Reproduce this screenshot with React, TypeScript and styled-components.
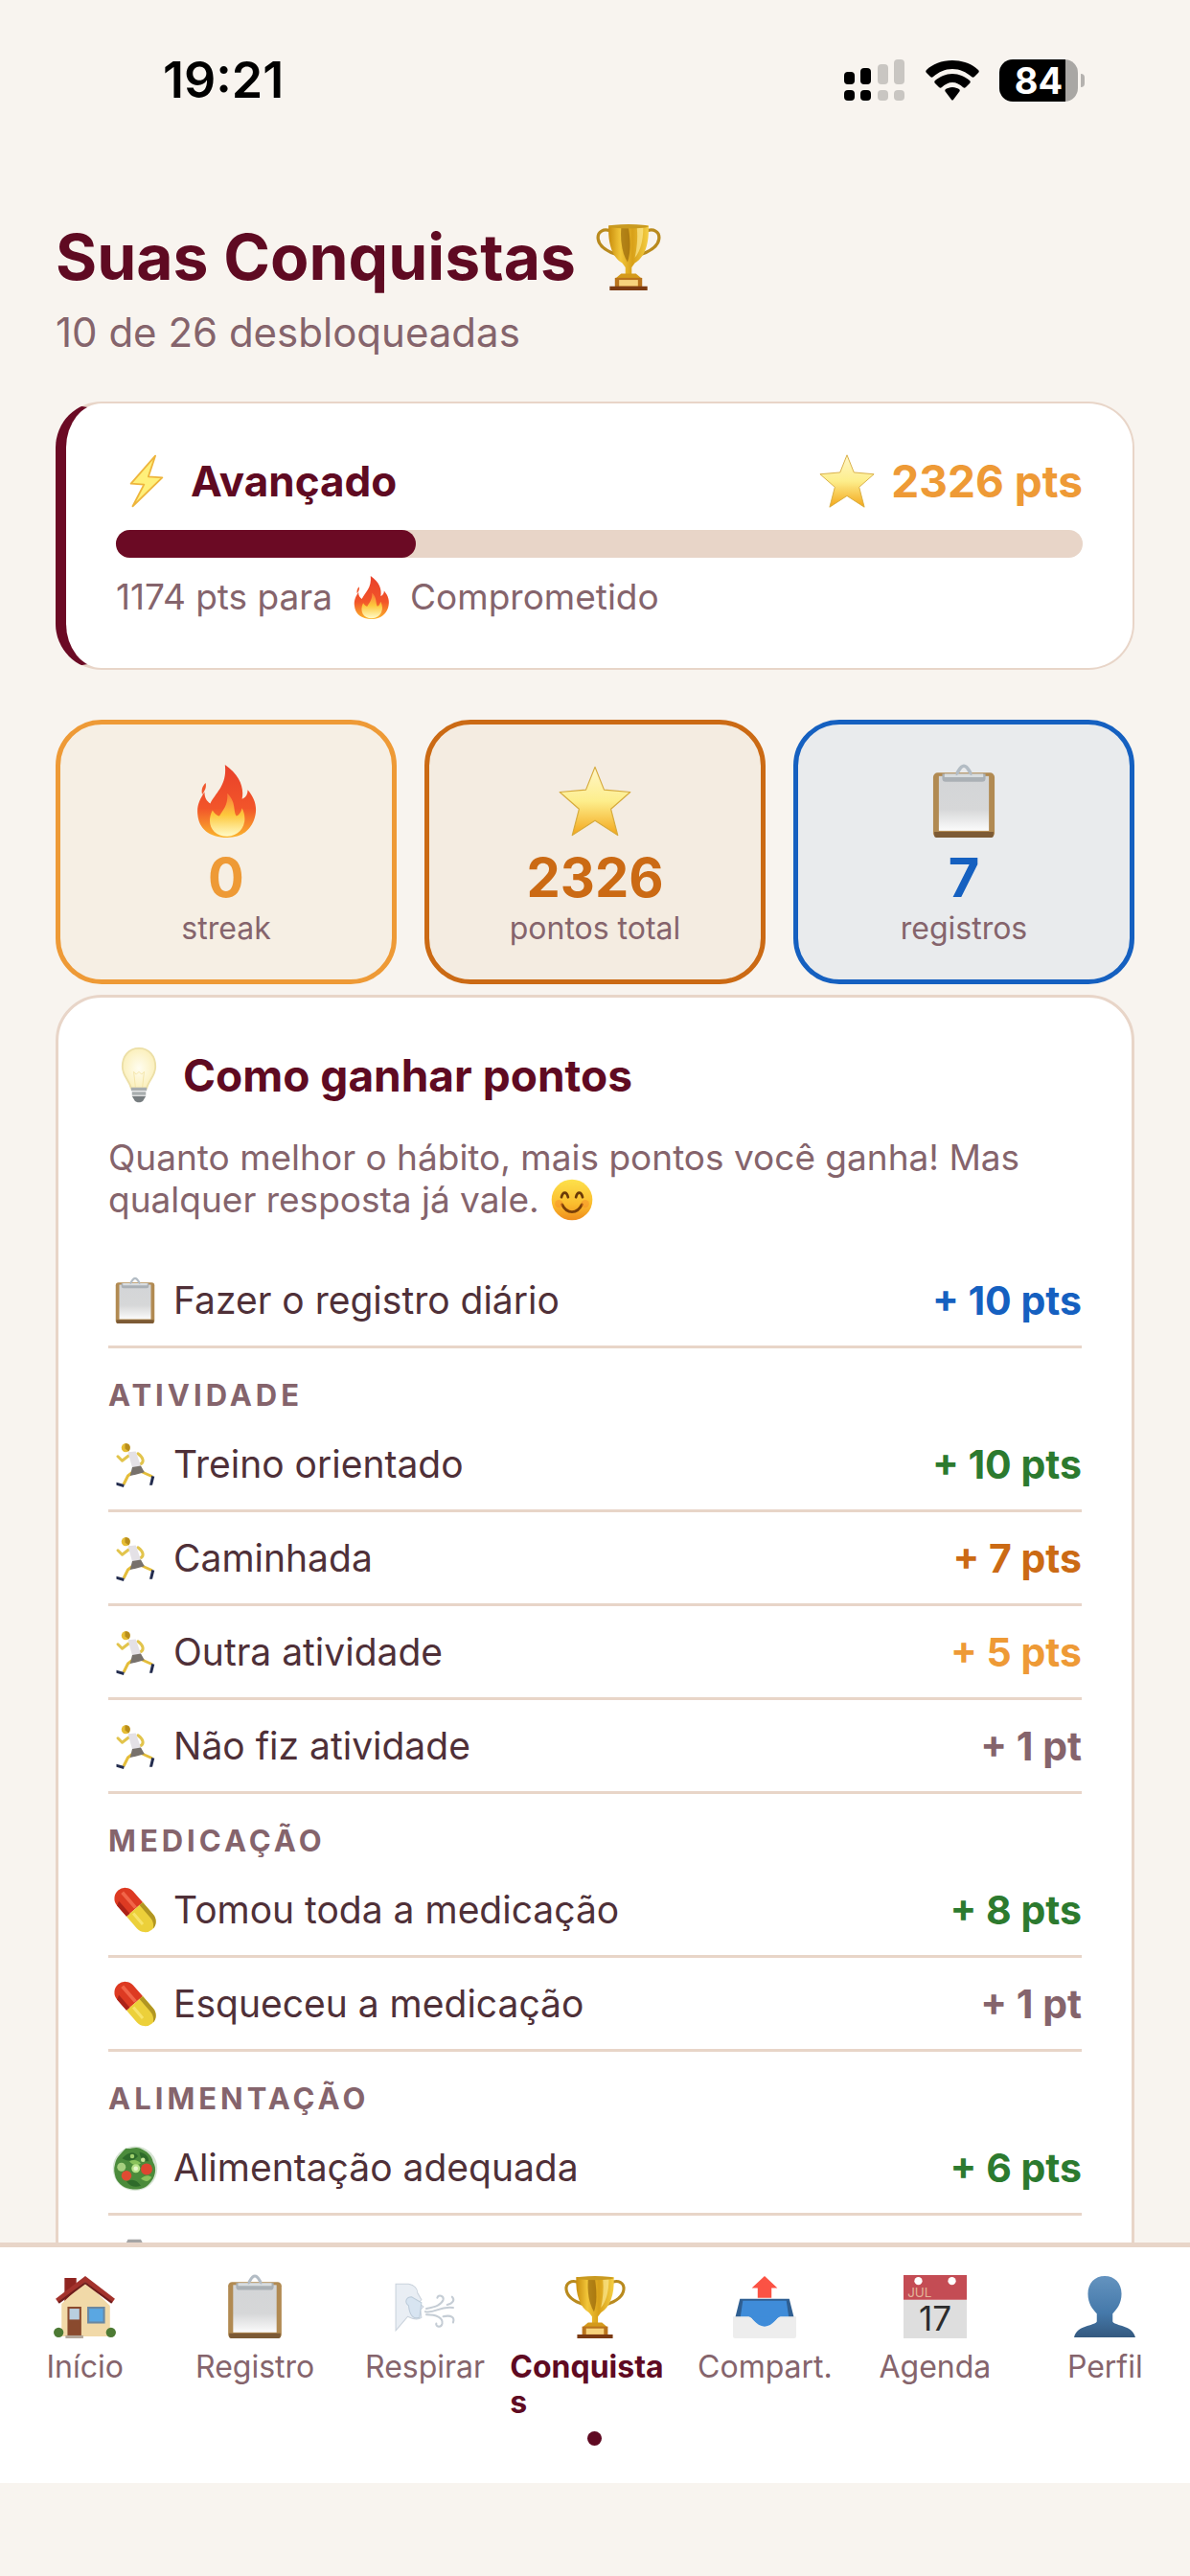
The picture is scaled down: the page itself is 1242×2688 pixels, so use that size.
import type { ReactNode } from 'react';
import styled, { createGlobalStyle } from 'styled-components';

type IconName =
  | 'trophy'
  | 'bolt'
  | 'star'
  | 'fire'
  | 'clipboard'
  | 'bulb'
  | 'smile'
  | 'runner'
  | 'pill'
  | 'salad'
  | 'plate'
  | 'house'
  | 'wind'
  | 'outbox'
  | 'calendar'
  | 'person';

const colors = {
  background: '#f8f4ef',
  wine: '#6b0a24',
  title: '#5f0a22',
  text: '#4f3038',
  muted: '#85646c',
  border: '#e8d5c8',
  amber: '#ee9a36',
  orange: '#cb6a14',
  blue: '#1560c0',
  green: '#2c7a2f',
};

const shapes: Record<IconName, ReactNode> = {
  trophy: (
    <>
      <path
        d='M17 8C8 4 2 8 3 15c1 8 9 12 18 15M47 8c9-4 15 0 14 7-1 8-9 12-18 15'
        fill='none'
        stroke='#b98a1e'
        strokeWidth='3'
      />
      <path d='M13 2h38c1 18-4 31-13 36l-3 4v7h-6v-7l-3-4C17 33 12 20 13 2z' fill='url(#gold)' />
      <path d='M25 4h7c2 14 2 24-1 33-5-8-7-20-6-33z' fill='#8a5a05' opacity='0.6' />
      <path d='M40 4h6c0 13-3 23-8 29 2-9 3-19 2-29z' fill='#fff0a0' opacity='0.6' />
      <ellipse cx='32' cy='3' rx='19' ry='2' fill='#c99a20' />
      <path d='M25 48h14l6 5H19z' fill='#d49a1c' />
      <path d='M19 52h26v9H19z' fill='#b9731c' />
      <path d='M23 54h18v6H23z' fill='#f7d27c' />
      <path d='M14 60h36v4H14z' fill='#7b3a12' />
    </>
  ),
  bolt: (
    <path
      d='M42 3 14 35l15 1-13 25 34-33-16-1z'
      fill='#fff07a'
      stroke='#eeb53c'
      strokeWidth='2'
      strokeLinejoin='round'
    />
  ),
  star: (
    <path
      d='m32 2 8 20 23 2-17 15 6 23-20-13-20 13 6-23L1 24l23-2z'
      fill='url(#starFill)'
      stroke='#d6aa3c'
      strokeWidth='1'
      strokeLinejoin='round'
    />
  ),
  fire: (
    <>
      <path
        d='M31 0c13 9 17 20 15 30 3-1 5-4 5-8 6 7 9 15 6 25-3 10-11 17-24 17C17 64 8 56 7 44c-1-8 2-14 6-20 0 5 2 8 5 10 5-10 15-16 13-34z'
        fill='url(#flame)'
      />
      <path d='M14 16c-3 3-4 6-3 10 2-3 4-6 3-10z' fill='#f0562c' />
      <path
        d='M33 25c8 8 5 15 8 20 3-1 4-4 5-7 6 12 0 24-13 25-13 0-19-11-13-23 2 3 4 5 6 5 4-6 8-11 7-20z'
        fill='url(#flameCore)'
      />
    </>
  ),
  clipboard: (
    <>
      <rect x='5' y='7' width='54' height='57' rx='4' fill='#b18a52' />
      <path d='M6 59h52v3a2 2 0 0 1-2 2H8a2 2 0 0 1-2-2z' fill='#7c5a35' />
      <rect x='10' y='10' width='44' height='48' fill='url(#paper)' />
      <path d='M13 8h38v4c0 2-1 3-3 3H16c-2 0-3-1-3-3z' fill='#aab0b5' />
      <path d='M15 8h34v3H15z' fill='#d8dde0' />
      <path d='M25 8c2 0 3-7 7-7s5 7 7 7' fill='none' stroke='#b3bcc4' strokeWidth='3' />
    </>
  ),
  bulb: (
    <>
      <path
        d='M32 1C20 1 13 10 13 22c0 11 8 16 10 25h18c2-9 10-14 10-25C51 10 44 1 32 1z'
        fill='url(#glass)'
        stroke='#ecdfa6'
        strokeWidth='2'
      />
      <path d='m28 46-2-18 3 3 3-3 3 3 3-3-2 18' fill='none' stroke='#f3e3a6' strokeWidth='1' />
      <path d='M23 46h18v4H23zM24 51h16v4H24z' fill='#a8adae' />
      <path d='M24 56h16l-3 5c-2 3-8 3-10 0z' fill='#777d80' />
    </>
  ),
  smile: (
    <>
      <circle cx='32' cy='32' r='31' fill='url(#face)' />
      <path
        d='M16 28c2-9 8-9 10 0M38 28c2-9 8-9 10 0'
        fill='none'
        stroke='#6a3a08'
        strokeWidth='4'
        strokeLinecap='round'
      />
      <path d='M17 39c7 15 23 15 30 0' fill='none' stroke='#7a3f08' strokeWidth='4' strokeLinecap='round' />
      <circle cx='12' cy='38' r='6' fill='#f5822a' opacity='0.4' />
      <circle cx='52' cy='38' r='6' fill='#f5822a' opacity='0.4' />
    </>
  ),
  runner: (
    <>
      <path
        d='m23 20-9 7-6-6M36 17c8 6 9 12 3 15'
        fill='none'
        stroke='#e2c44c'
        strokeWidth='4'
        strokeLinecap='round'
        strokeLinejoin='round'
      />
      <path d='m31 41-9 7-6 12M36 40l11 5 9 4' fill='none' stroke='#e4bd3a' strokeWidth='4' />
      <path d='m22 15 11-1 8 23-12 3z' fill='#e4e1e6' />
      <path d='m28 36 12-2 5 9-11 3-9 2z' fill='#77716c' />
      <circle cx='19' cy='9' r='6' fill='#e6bd34' />
      <path d='M18 3c7-1 9 6 5 11l-5-4z' fill='#b88d1c' />
      <path d='m6 57 11 3-1 4-10-3zM55 48l4 1-3 12h-4z' fill='#232c4e' />
    </>
  ),
  pill: (
    <g transform='rotate(-41 32 32)'>
      <path d='M17 31V11a15 15 0 0 1 30 0v20z' fill='#dd3a22' />
      <path d='M17 31h30v22a15 15 0 0 1-30 0z' fill='#ecd03a' />
      <path d='M41 31h6v22c0 8-6 15-13 15 5-4 7-8 7-15z' fill='#b19622' />
      <path d='M23 8v23h-6V11z' fill='#ab2218' />
      <path d='M32 2h5v28h-5z' fill='#ff8264' opacity='0.6' />
      <path d='M25 34h4v20h-4z' fill='#fff08a' opacity='0.6' />
    </g>
  ),
  salad: (
    <>
      <circle cx='32' cy='33' r='31' fill='#d5e3d2' />
      <path d='M4 27c2-10 8-14 15-22 7 2 12-3 20 0 9 4 16 9 18 19 6 9 3 22-5 30-7 8-15 8-23 8-12-1-20-7-24-16-2-7-3-12-1-19z' fill='#4b8b3b' />
      <path d='M14 19c8-9 17-11 22-3-6 7-14 8-22 3zM38 10c9 2 13 7 13 13-8 1-12-5-13-13zM20 51c8-4 15-2 20 6-8 3-15 1-20-6z' fill='#2e6b2a' />
      <path d='M24 23c6-3 12-2 16 3-6 4-11 3-16-3zM40 47c6-5 11-5 15-2-3 6-8 8-15 2z' fill='#89c25b' />
      <circle cx='20' cy='43' r='7' fill='#e04b32' />
      <circle cx='48' cy='34' r='8' fill='#dd4630' />
      <circle cx='33' cy='33' r='6' fill='#b8e28a' />
      <circle cx='33' cy='33' r='3' fill='#e9f7cf' />
      <circle cx='13' cy='31' r='6' fill='#a6cf7f' />
      <circle cx='28' cy='16' r='3' fill='#9fd06e' />
      <circle cx='43' cy='21' r='3' fill='#c9e49a' />
    </>
  ),
  plate: (
    <>
      <path d='M22 1h18l4 8H18z' fill='#a5a5a5' />
      <circle cx='32' cy='36' r='28' fill='#e6e6e6' />
    </>
  ),
  house: (
    <>
      <path d='M11 3h12v20l-12 7z' fill='#8f2420' />
      <path d='M32 6 57 31v31H8V29z' fill='#f1d9a8' />
      <path d='M32 1 2 24l3 4 27-21 27 21 3-4z' fill='#a3322c' />
      <path d='M5 28 32 8l27 20' fill='none' stroke='#6f1d1c' strokeWidth='2' />
      <path d='M14 32h14v30H14z' fill='#8a4a2e' />
      <path d='M16 34h10v11H16z' fill='#b9cfe0' />
      <path d='M34 32h18v17H34z' fill='#6b87a0' />
      <path d='M36 34h14v13H36z' fill='#5aa7e2' />
      <path d='M12 61h18v3H12z' fill='#b4a79a' />
      <circle cx='5' cy='58' r='5' fill='#4d7a34' />
      <circle cx='58' cy='58' r='5' fill='#4d7a34' />
    </>
  ),
  wind: (
    <>
      <path
        d='M2 9h13c6 1 9 5 9 9l4 7-3 3 5 4-3 3 1 8c-4 3-10 1-14-1L2 56z'
        fill='#e9eef4'
        stroke='#c9d2dc'
        strokeWidth='1'
      />
      <path d='M15 31c-5-4-2-9 3-9l10 6-2 15c-6 2-10-2-11-12z' fill='#d7e4f1' stroke='#bccbd9' strokeWidth='1' />
      <path
        d='M32 37c10 2 14-6 28-4M33 34c10-2 15-4 17-9 1-4-5-6-6-2M33 40c10 0 17 3 16 9-1 5-7 3-6 0M50 42c8-2 12 1 10 6M54 30c6-1 8-5 5-8'
        fill='none'
        stroke='#c5cdd5'
        strokeWidth='2'
        strokeLinecap='round'
      />
    </>
  ),
  outbox: (
    <>
      <path d='M7 24h50l5 20H2z' fill='#2f5f92' />
      <path d='M10 26h44l3 20H7z' fill='#3f8cd9' />
      <path d='M0 42h16c4 0 7 10 16 10s12-10 16-10h16v20a2 2 0 0 1-2 2H2a2 2 0 0 1-2-2z' fill='#ededed' />
      <path d='M16 42c4 0 7 10 16 10s12-10 16-10z' fill='#3f8cd9' />
      <path d='m32 1 13 12h-6v10H25V13h-6z' fill='#fb5244' />
    </>
  ),
  calendar: (
    <>
      <path d='M0 25h64v39H0z' fill='#dedede' />
      <path d='M0 0h64v25H0z' fill='#c44c54' />
      <circle cx='15' cy='6' r='4' fill='#fff' />
      <circle cx='49' cy='6' r='4' fill='#fff' />
      <text x='4' y='22' fontSize='13' fill='#e3b49a'>
        JUL
      </text>
      <text x='32' y='56' fontSize='34' textAnchor='middle' fill='#2c2c2c'>
        17
      </text>
    </>
  ),
  person: (
    <path
      d='M32 1c10 0 17 7 17 18 0 10-5 16-9 20v8c3 5 20 3 23 16H1c3-13 20-11 23-16v-8c-4-4-9-10-9-20C15 8 22 1 32 1z'
      fill='url(#silhouette)'
    />
  ),
};

function Icon({ name, size }: { name: IconName; size: number }) {
  return (
    <Svg viewBox='0 0 64 64' width={size} height={size} aria-hidden='true'>
      {shapes[name]}
    </Svg>
  );
}

function Gradients() {
  return (
    <HiddenSvg width='0' height='0' aria-hidden='true'>
      <defs>
        <linearGradient id='gold'>
          <stop offset='0' stopColor='#c98d0c' />
          <stop offset='0.3' stopColor='#f2c63a' />
          <stop offset='0.6' stopColor='#d8a018' />
          <stop offset='1' stopColor='#f5cf45' />
        </linearGradient>
        <linearGradient id='starFill' x2='0' y2='1'>
          <stop offset='0' stopColor='#fff6c8' />
          <stop offset='0.5' stopColor='#fdee8c' />
          <stop offset='1' stopColor='#f3a61a' />
        </linearGradient>
        <linearGradient id='flame' x2='0' y2='1'>
          <stop offset='0' stopColor='#e8402a' />
          <stop offset='0.6' stopColor='#f2552a' />
          <stop offset='1' stopColor='#fbb52c' />
        </linearGradient>
        <linearGradient id='flameCore' x2='0' y2='1'>
          <stop offset='0' stopColor='#f9783a' />
          <stop offset='0.5' stopColor='#fdc83c' />
          <stop offset='1' stopColor='#fffbc8' />
        </linearGradient>
        <linearGradient id='paper' x2='0' y2='1'>
          <stop offset='0' stopColor='#d3d5d7' />
          <stop offset='0.6' stopColor='#d6d7d8' />
          <stop offset='1' stopColor='#fbfbfb' />
        </linearGradient>
        <radialGradient id='glass'>
          <stop offset='0' stopColor='#fffdf0' />
          <stop offset='1' stopColor='#fbf0bd' />
        </radialGradient>
        <linearGradient id='face' x2='0' y2='1'>
          <stop offset='0' stopColor='#fde14c' />
          <stop offset='0.6' stopColor='#fbbd2e' />
          <stop offset='1' stopColor='#ee8c1c' />
        </linearGradient>
        <linearGradient id='silhouette' x2='0' y2='1'>
          <stop offset='0' stopColor='#6493bf' />
          <stop offset='0.6' stopColor='#4579aa' />
          <stop offset='1' stopColor='#34597f' />
        </linearGradient>
      </defs>
    </HiddenSvg>
  );
}

const stats: { icon: IconName; value: number; label: string; color: string; background: string }[] = [
  { icon: 'fire', value: 0, label: 'streak', color: colors.amber, background: '#f6efe4' },
  { icon: 'star', value: 2326, label: 'pontos total', color: colors.orange, background: '#f4ece1' },
  { icon: 'clipboard', value: 7, label: 'registros', color: colors.blue, background: '#e9ebed' },
];

type Rule = { label: string; points: string; color: string };

const sections: { title: string; icon: IconName; rules: Rule[] }[] = [
  {
    title: 'Atividade',
    icon: 'runner',
    rules: [
      { label: 'Treino orientado', points: '+ 10 pts', color: colors.green },
      { label: 'Caminhada', points: '+ 7 pts', color: colors.orange },
      { label: 'Outra atividade', points: '+ 5 pts', color: colors.amber },
      { label: 'Não fiz atividade', points: '+ 1 pt', color: colors.muted },
    ],
  },
  {
    title: 'Medicação',
    icon: 'pill',
    rules: [
      { label: 'Tomou toda a medicação', points: '+ 8 pts', color: colors.green },
      { label: 'Esqueceu a medicação', points: '+ 1 pt', color: colors.muted },
    ],
  },
  {
    title: 'Alimentação',
    icon: 'salad',
    rules: [{ label: 'Alimentação adequada', points: '+ 6 pts', color: colors.green }],
  },
];

const tabs: { icon: IconName; label: string; active?: boolean }[] = [
  { icon: 'house', label: 'Início' },
  { icon: 'clipboard', label: 'Registro' },
  { icon: 'wind', label: 'Respirar' },
  { icon: 'trophy', label: 'Conquistas', active: true },
  { icon: 'outbox', label: 'Compart.' },
  { icon: 'calendar', label: 'Agenda' },
  { icon: 'person', label: 'Perfil' },
];

function StatusBar() {
  return (
    <Status>
      <time>19:21</time>
      <StatusIcons>
        <svg width='64' height='44' viewBox='0 0 64 44' aria-hidden='true'>
          <rect x='0' y='13' width='11' height='13' rx='4' />
          <rect x='17' y='9' width='11' height='17' rx='4' />
          <rect x='35' y='5' width='11' height='21' rx='4' fill='#c9c6c2' />
          <rect x='52' y='0' width='11' height='26' rx='4' fill='#c9c6c2' />
          <rect x='0' y='32' width='11' height='11' rx='4' />
          <rect x='17' y='32' width='11' height='11' rx='4' />
          <rect x='35' y='32' width='11' height='11' rx='4' fill='#c9c6c2' />
          <rect x='52' y='32' width='11' height='11' rx='4' fill='#c9c6c2' />
        </svg>
        <svg width='56' height='42' viewBox='0 0 56 42' aria-hidden='true'>
          <path d='M28 0C17 0 7 4 1 10c-1 1-1 2 0 3l4 4c1 1 2 1 3 0 6-5 12-8 20-8s14 3 20 8c1 1 2 1 3 0l4-4c1-1 1-2 0-3C49 4 39 0 28 0z' />
          <path d='M28 14c-7 0-13 3-18 7-1 1-1 2 0 3l4 4c1 1 2 1 3 0 3-3 7-5 11-5s8 2 11 5c1 1 2 1 3 0l4-4c1-1 1-2 0-3-5-4-11-7-18-7z' />
          <path d='M28 28c-3 0-5 1-7 2-1 1-1 2 0 3l6 8c1 1 1 1 2 0l6-8c1-1 1-2 0-3-2-1-4-2-7-2z' />
        </svg>
        <BatteryWrap>
          <Battery>84</Battery>
          <BatteryTip />
        </BatteryWrap>
      </StatusIcons>
    </Status>
  );
}

function RuleItem({ icon, label, points, color }: Rule & { icon: IconName }) {
  return (
    <RuleRow>
      <RuleIcon>
        <Icon name={icon} size={48} />
      </RuleIcon>
      <span>{label}</span>
      <Points $color={color}>{points}</Points>
    </RuleRow>
  );
}

function App() {
  return (
    <Page>
      <GlobalStyle />
      <Gradients />
      <Content>
        <StatusBar />
        <Header>
          <h1>
            Suas Conquistas
            <Icon name='trophy' size={70} />
          </h1>
          <p>10 de 26 desbloqueadas</p>
        </Header>

        <LevelCard>
          <LevelTop>
            <CardTitle $size={44}>
              <TitleIcon>
                <Icon name='bolt' size={58} />
              </TitleIcon>
              Avançado
            </CardTitle>
            <Total>
              <Icon name='star' size={58} />
              2326 pts
            </Total>
          </LevelTop>
          <Track role='progressbar' aria-label='Progresso do nível' aria-valuenow={31}>
            <Fill style={{ width: '31%' }} />
          </Track>
          <NextLevel>
            1174 pts para
            <Icon name='fire' size={45} />
            Comprometido
          </NextLevel>
        </LevelCard>

        <Stats>
          {stats.map((stat) => (
            <Stat key={stat.label} $color={stat.color} $background={stat.background}>
              <Icon name={stat.icon} size={76} />
              <strong>{stat.value}</strong>
              <span>{stat.label}</span>
            </Stat>
          ))}
        </Stats>

        <RulesCard>
          <CardTitle $size={46}>
            <TitleIcon>
              <Icon name='bulb' size={58} />
            </TitleIcon>
            Como ganhar pontos
          </CardTitle>
          <Hint>
            Quanto melhor o hábito, mais pontos você ganha! Mas qualquer resposta já vale.{' '}
            <Icon name='smile' size={44} />
          </Hint>
          <ul>
            <RuleItem icon='clipboard' label='Fazer o registro diário' points='+ 10 pts' color={colors.blue} />
          </ul>
          {sections.map((section) => (
            <section key={section.title}>
              <SectionTitle>{section.title}</SectionTitle>
              <ul>
                {section.rules.map((rule) => (
                  <RuleItem key={rule.label} icon={section.icon} {...rule} />
                ))}
              </ul>
            </section>
          ))}
          <RuleRow as='div'>
            <RuleIcon>
              <Icon name='plate' size={48} />
            </RuleIcon>
          </RuleRow>
        </RulesCard>
      </Content>

      <TabBar>
        {tabs.map(({ icon, label, active }) => (
          <Tab key={label} href='#' $active={active} aria-current={active ? 'page' : undefined}>
            <Icon name={icon} size={66} />
            <span>{label}</span>
            {active && <Dot />}
          </Tab>
        ))}
      </TabBar>
    </Page>
  );
}

export default App;

const GlobalStyle = createGlobalStyle`
  * {
    box-sizing: border-box;
  }
  body {
    margin: 0;
    background-color: ${colors.background};
    font-family: Inter, 'Liberation Sans', sans-serif;
  }
  h1, h2, h3, p, ul {
    margin: 0;
    padding: 0;
  }
  ul {
    list-style: none;
  }
`;

const Svg = styled.svg`
  flex-shrink: 0;
  overflow: visible;
`;

const HiddenSvg = styled.svg`
  position: absolute;
`;

const Page = styled.div`
  display: flex;
  flex-direction: column;
  height: 100vh;
  padding-bottom: 97px;
`;

const Content = styled.main`
  flex: 1;
  min-height: 0;
  overflow: hidden;
  padding: 0 58px;
`;

const Status = styled.div`
  display: flex;
  justify-content: space-between;
  align-items: center;
  padding: 54px 52px 0 112px;
  font-size: 52px;
  font-weight: 600;
  line-height: 60px;
  color: #000;
`;

const StatusIcons = styled.div`
  display: flex;
  align-items: center;
  gap: 21px;
`;

const BatteryWrap = styled.div`
  display: flex;
  align-items: center;
  gap: 3px;
`;

const Battery = styled.div`
  width: 82px;
  border-radius: 14px;
  background: linear-gradient(to right, #000 84%, #a9a7a4 84%);
  color: #fff;
  font-size: 38px;
  font-weight: 700;
  line-height: 44px;
  text-align: center;
`;

const BatteryTip = styled.div`
  width: 4px;
  height: 14px;
  border-radius: 0 4px 4px 0;
  background-color: #b5b2af;
`;

const Header = styled.header`
  padding-top: 112px;

  h1 {
    display: flex;
    align-items: center;
    gap: 20px;
    color: ${colors.title};
    font-size: 66px;
    font-weight: 700;
    line-height: 84px;
  }
  p {
    margin-top: 12px;
    color: ${colors.muted};
    font-size: 42px;
    line-height: 50px;
  }
`;

const LevelCard = styled.section`
  margin-top: 47px;
  padding: 54px 52px 51px;
  border: 2px solid ${colors.border};
  border-left: 11px solid ${colors.wine};
  border-radius: 48px;
  background-color: #fff;
`;

const LevelTop = styled.div`
  display: flex;
  justify-content: space-between;
`;

const CardTitle = styled.h2<{ $size: number }>`
  display: flex;
  align-items: center;
  gap: 14px;
  height: 54px;
  color: ${colors.title};
  font-size: ${({ $size }) => $size}px;
  font-weight: 700;
  line-height: 54px;
`;

const TitleIcon = styled.span`
  display: flex;
  justify-content: center;
  width: 64px;
`;

const Total = styled.div`
  display: flex;
  align-items: center;
  gap: 17px;
  height: 54px;
  color: ${colors.amber};
  font-size: 46px;
  font-weight: 700;
  line-height: 54px;
`;

const Track = styled.div`
  height: 29px;
  margin-top: 24px;
  border-radius: 15px;
  background-color: ${colors.border};
`;

const Fill = styled.div`
  height: 100%;
  border-radius: 15px;
  background-color: ${colors.wine};
`;

const NextLevel = styled.p`
  display: flex;
  align-items: center;
  gap: 18px;
  margin-top: 18px;
  color: ${colors.muted};
  font-size: 37px;
  line-height: 46px;
`;

const Stats = styled.div`
  display: grid;
  grid-template-columns: repeat(3, 1fr);
  gap: 29px;
  margin-top: 52px;
`;

const Stat = styled.div<{ $color: string; $background: string }>`
  display: flex;
  flex-direction: column;
  align-items: center;
  padding: 42px 0 33px;
  border: 5px solid ${({ $color }) => $color};
  border-radius: 48px;
  background-color: ${({ $background }) => $background};

  strong {
    margin-top: 9px;
    color: ${({ $color }) => $color};
    font-size: 56px;
    font-weight: 700;
    line-height: 66px;
  }
  span {
    color: ${colors.muted};
    font-size: 32px;
    line-height: 40px;
  }
`;

const RulesCard = styled.section`
  margin-top: 11px;
  padding: 54px 52px;
  border: 3px solid ${colors.border};
  border-radius: 48px;
  background-color: #fff;
`;

const Hint = styled.p`
  margin: 37px 0 35px;
  color: ${colors.muted};
  font-size: 37px;
  line-height: 44px;

  svg {
    margin-left: 2px;
    vertical-align: top;
  }
`;

const SectionTitle = styled.h3`
  padding: 30px 0 5px;
  color: ${colors.muted};
  font-size: 31px;
  font-weight: 700;
  letter-spacing: 4px;
  line-height: 38px;
  text-transform: uppercase;
`;

const RuleRow = styled.li`
  display: flex;
  align-items: center;
  gap: 12px;
  height: 98px;
  border-bottom: 3px solid ${colors.border};
  color: ${colors.text};
  font-size: 39px;
`;

const RuleIcon = styled.span`
  display: flex;
  justify-content: center;
  width: 56px;
`;

const Points = styled.strong<{ $color: string }>`
  margin-left: auto;
  color: ${({ $color }) => $color};
  font-size: 41px;
  font-weight: 700;
`;

const TabBar = styled.nav`
  display: grid;
  grid-template-columns: repeat(7, minmax(0, 1fr));
  height: 251px;
  padding-top: 29px;
  border-top: 5px solid ${colors.border};
  background-color: #fff;
`;

const Tab = styled.a<{ $active?: boolean }>`
  display: flex;
  flex-direction: column;
  align-items: center;
  color: ${({ $active }) => ($active ? colors.title : colors.muted)};
  font-size: 32px;
  font-weight: ${({ $active }) => ($active ? 700 : 400)};
  line-height: 37px;
  text-decoration: none;

  span {
    max-width: 100%;
    margin-top: 11px;
    overflow-wrap: anywhere;
  }
`;

const Dot = styled.i`
  width: 15px;
  height: 15px;
  margin-top: 12px;
  border-radius: 50%;
  background-color: ${colors.title};
`;
